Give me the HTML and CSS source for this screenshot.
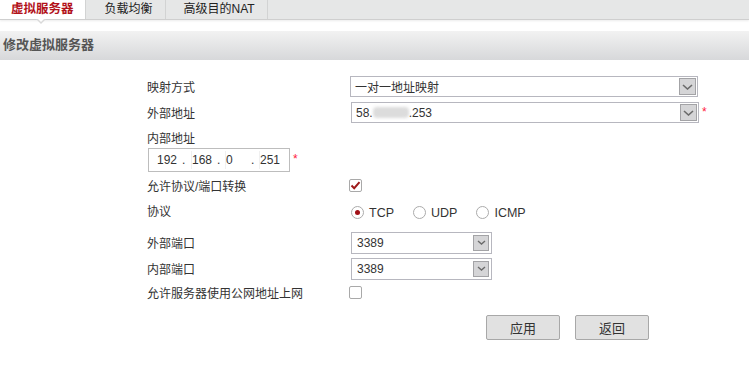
FILE: index.html
```html
<!doctype html>
<html lang="zh-CN">
  <head>
    <meta charset="UTF-8" />
    <title>修改虚拟服务器</title>
    <link rel="stylesheet" href="styles.css">
  </head>
  <body>
    <!-- Вкладки -->
    <div class="tabs">
      <div class="tab tab-active">虚拟服务器</div>
      <div class="tab">负载均衡</div>
      <div class="tab tab-last">高级目的NAT</div>
    </div>

    <!-- Заголовок панели -->
    <div class="panel-title">修改虚拟服务器</div>

    <!-- Форма -->
    <form class="form">
      <div class="row row-1">
        <div class="label">映射方式</div>
        <div class="select select-wide">
          <span class="select-value">一对一地址映射</span>
          <span class="drop">
            <svg width="11" height="6" viewBox="0 0 11 6"><path d="M1 1 L5.5 5 L10 1" fill="none" stroke="#6b6b6b" stroke-width="1.6"/></svg>
          </span>
        </div>
      </div>

      <div class="row row-2">
        <div class="label">外部地址</div>
        <div class="select select-wide select-shift">
          <span class="select-value">58.<span class="blur"></span>.253</span>
          <span class="drop">
            <svg width="11" height="6" viewBox="0 0 11 6"><path d="M1 1 L5.5 5 L10 1" fill="none" stroke="#6b6b6b" stroke-width="1.6"/></svg>
          </span>
        </div>
        <span class="req">*</span>
      </div>

      <div class="row row-3">
        <div class="label">内部地址</div>
      </div>

      <div class="row row-4">
        <div class="ip-box">
          <span class="seg seg-1">192</span><span class="dot dot-1">.</span><span class="seg seg-2">168</span><span class="dot dot-2">.</span><span class="seg seg-3">0</span><span class="dot dot-3">.</span><span class="seg seg-4">251</span>
        </div>
        <span class="req">*</span>
      </div>

      <div class="row row-5">
        <div class="label">允许协议/端口转换</div>
        <span class="check">
          <svg width="11" height="11" viewBox="0 0 11 11"><path d="M1.5 5.5 L4.2 8.2 L9.5 2.2" fill="none" stroke="#9e1a1a" stroke-width="2"/></svg>
        </span>
      </div>

      <div class="row row-6">
        <div class="label label-up">协议</div>
        <div class="radios">
          <span class="radio radio-on"></span><span class="radio-text">TCP</span>
          <span class="radio"></span><span class="radio-text">UDP</span>
          <span class="radio"></span><span class="radio-text">ICMP</span>
        </div>
      </div>

      <div class="row row-7">
        <div class="label">外部端口</div>
        <div class="select select-port">
          <span class="select-value">3389</span>
          <span class="drop drop-small">
            <svg width="9" height="5" viewBox="0 0 9 5"><path d="M1 1 L4.5 4 L8 1" fill="none" stroke="#6b6b6b" stroke-width="1.4"/></svg>
          </span>
        </div>
      </div>

      <div class="row row-8">
        <div class="label">内部端口</div>
        <div class="select select-port">
          <span class="select-value">3389</span>
          <span class="drop drop-small">
            <svg width="9" height="5" viewBox="0 0 9 5"><path d="M1 1 L4.5 4 L8 1" fill="none" stroke="#6b6b6b" stroke-width="1.4"/></svg>
          </span>
        </div>
      </div>

      <div class="row row-9">
        <div class="label">允许服务器使用公网地址上网</div>
        <span class="check"></span>
      </div>

      <div class="buttons">
        <button type="button" class="btn">应用</button>
        <button type="button" class="btn">返回</button>
      </div>
    </form>
  </body>
</html>
```

FILE: styles.css
```css
/* Reset */
* {
  margin: 0;
  padding: 0;
  box-sizing: border-box;
}

body {
  width: 749px;
  height: 380px;
  overflow: hidden;
  background: #fff;
  font-family: "Liberation Sans", "Noto Sans CJK SC", sans-serif;
  font-size: 12px;
  color: #333;
}

/* Tabs */
.tabs {
  display: flex;
  height: 19px;
  background: #e6e7e7;
  box-shadow: 0 1px 0 #cfcfcf, 0 2px 2px rgba(0, 0, 0, 0.08);
  position: relative;
}

.tab {
  height: 19px;
  line-height: 18px;
  padding: 0 12px 0 19px;
  border-right: 1px solid #d2d3d3;
  color: #222;
  font-size: 12px;
}

.tab-last {
  padding: 0 12px 0 18px;
}

.tab-active {
  position: relative;
  padding: 0 11px;
  background: #fff;
  color: #b2121a;
  font-weight: bold;
  font-size: 12.5px;
}

/* Pointer under the active tab */
.tab-active::after {
  content: '';
  position: absolute;
  left: 36px;
  top: 19px;
  width: 0;
  height: 0;
  border-left: 5px solid transparent;
  border-right: 5px solid transparent;
  border-top: 5px solid #d9d9d9;
}

.tab-active::before {
  content: '';
  position: absolute;
  left: 37px;
  top: 18px;
  width: 0;
  height: 0;
  border-left: 4px solid transparent;
  border-right: 4px solid transparent;
  border-top: 4px solid #fff;
  z-index: 2;
}

/* Panel title */
.panel-title {
  margin-top: 12px;
  height: 29px;
  line-height: 28px;
  padding-left: 3px;
  background: linear-gradient(#f2f2f2, #d7d8da);
  color: #555;
  font-size: 13px;
  font-weight: bold;
}

/* Form */
.form {
  padding-left: 147px;
  padding-top: 14px;
}

.row {
  display: flex;
  align-items: center;
}

.label {
  width: 202px;
  color: #333;
}

.label-up {
  padding-bottom: 5px;
}

.row-1 { height: 25px; }
.row-2 { height: 27px; }
.row-3 { height: 22px; }
.row-4 { height: 24px; }
.row-5 { height: 23px; margin-top: 2px; }
.row-6 { height: 31px; }
.row-7 { height: 29px; }
.row-8 { height: 23px; }
.row-9 { height: 25px; }

/* Select */
.select {
  display: flex;
  align-items: center;
  justify-content: space-between;
  border: 1px solid #b7b7bf;
  background: #fff;
  color: #333;
}

.select-wide {
  width: 348px;
  height: 21px;
  margin-left: 1px;
  padding-left: 4px;
}

.select-shift {
  margin-left: 2px;
}

.select-port {
  width: 141px;
  height: 22px;
  margin-left: 2px;
  padding-left: 5px;
}

.select-value {
  display: flex;
  align-items: center;
}

.blur {
  display: inline-block;
  width: 36px;
  height: 11px;
  background: #dcdcdc;
  border-radius: 4px;
  filter: blur(1.5px);
}

.drop {
  display: flex;
  align-items: center;
  justify-content: center;
  width: 17px;
  height: 17px;
  margin-right: 1px;
  background: #d5d5d7;
  border: 1px solid #a3a3a6;
}

.drop-small {
  width: 16px;
  height: 16px;
  margin-right: 2px;
}

.req {
  margin-left: 3px;
  margin-top: -2px;
  color: #ff2040;
  font-size: 12px;
}

/* IP address */
.ip-box {
  display: flex;
  align-items: center;
  width: 142px;
  height: 24px;
  margin-left: 1px;
  padding-left: 8px;
  border: 1px solid #bdbdbd;
  color: #333;
}

.seg {
  height: 18px;
  line-height: 18px;
  border-left: 1px solid #f0f0f0;
  margin-left: -1px;
}

.seg-1 { width: 25px; border-left: none; margin-left: 0; }
.seg-2 { width: 26px; }
.seg-3 { width: 26px; }
.seg-4 { width: 24px; }

.dot-1 { width: 10px; }
.dot-2 { width: 9px; }
.dot-3 { width: 9px; }

/* Checkbox */
.check {
  display: flex;
  align-items: center;
  justify-content: center;
  width: 13px;
  height: 13px;
  border: 1px solid #a9a9a9;
  border-radius: 2px;
  background: #fff;
}

/* Radio */
.radios {
  display: flex;
  align-items: center;
  margin-left: 2px;
}

.radio {
  width: 13px;
  height: 13px;
  border: 1px solid #ababab;
  border-radius: 50%;
  background: #fff;
  display: flex;
  align-items: center;
  justify-content: center;
}

.radio-on::after {
  content: '';
  width: 5px;
  height: 5px;
  border-radius: 50%;
  background: #a10f16;
}

.radio-text {
  margin-left: 5px;
  margin-right: 19px;
  font-size: 12.5px;
  color: #333;
}

/* Buttons */
.buttons {
  display: flex;
  gap: 15px;
  margin-top: 10px;
  margin-left: 339px;
}

.btn {
  width: 74px;
  height: 25px;
  border: 1px solid #a8a8a8;
  border-radius: 2px;
  background: #e1e1e1;
  color: #333;
  font-family: "Liberation Sans", "Noto Sans CJK SC", sans-serif;
  font-size: 13px;
}
```
